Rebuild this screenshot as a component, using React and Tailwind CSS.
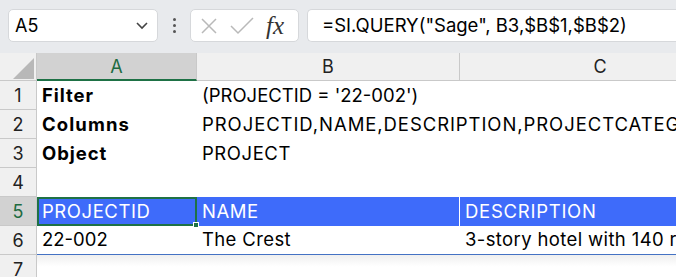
import React from "react";

const font = { fontFamily: "Inter, 'Noto Sans', sans-serif" };

const RowHead = ({ n, active }) => (
  <div
    className={`flex items-center justify-center border-b border-r border-[#c9c9c9] text-[18px] ${
      active ? "bg-[#d2d2d2] text-[#1e6b41]" : "bg-[#f0f0f0] text-[#222]"
    }`}
  >
    {n}
  </div>
);

const Cell = ({ children, className = "" }) => (
  <div className={`flex items-center whitespace-nowrap pl-[5px] text-[18.5px] text-black ${className}`}>
    {children}
  </div>
);

const App = () => {
  return (
    <div className="w-[676px] h-[277px] overflow-hidden bg-white" style={font}>
      {/* toolbar */}
      <div className="flex h-[53px] items-start bg-[#e8eaed] pt-[9px] pl-[8px]">
        <div className="flex h-[33px] w-[150px] items-center justify-between rounded-[5px] border border-[#d6d8db] bg-white pl-[6px] pr-[8px] text-[18px] text-black">
          <span>A5</span>
          <svg width="14" height="10" viewBox="0 0 14 10">
            <path d="M2 2 L7 7 L12 2" fill="none" stroke="#444" strokeWidth="1.6" />
          </svg>
        </div>
        <div className="flex h-[33px] w-[32px] flex-col items-center justify-center gap-[3px]">
          <span className="h-[3px] w-[3px] rounded-full bg-[#555]" />
          <span className="h-[3px] w-[3px] rounded-full bg-[#555]" />
          <span className="h-[3px] w-[3px] rounded-full bg-[#555]" />
        </div>
        <div className="flex h-[33px] w-[109px] items-center rounded-[5px] border border-[#d6d8db] bg-white">
          <svg width="20" height="20" viewBox="0 0 20 20" className="ml-[8px]">
            <path d="M3 3 L17 17 M17 3 L3 17" stroke="#b9b9b9" strokeWidth="1.5" />
          </svg>
          <svg width="26" height="20" viewBox="0 0 26 20" className="ml-[10px]">
            <path d="M2 10 L9 17 L24 2" fill="none" stroke="#b9b9b9" strokeWidth="1.5" />
          </svg>
          <span
            className="ml-[11px] text-[25px] italic leading-none text-[#333]"
            style={{ fontFamily: "'Liberation Serif', 'DejaVu Serif', serif" }}
          >
            fx
          </span>
        </div>
        <div className="ml-[8px] flex h-[33px] flex-1 items-center rounded-l-[5px] border border-r-0 border-[#d6d8db] bg-white pl-[14px] text-[18.5px] text-black whitespace-nowrap">
          =SI.QUERY("Sage", B3,$B$1,$B$2)
        </div>
      </div>

      {/* sheet */}
      <div className="grid grid-cols-[37px_160px_263px_280px] grid-rows-[28px_29px_29px_29px_29px_29px_29px_29px]">
        {/* header row */}
        <div className="relative border-b border-r border-[#c9c9c9] bg-[#f0f0f0]">
          <svg width="22" height="21" viewBox="0 0 22 21" className="absolute left-[13px] top-[5px]">
            <path d="M21 0 L21 21 L0 21 Z" fill="#b8b8b8" />
          </svg>
        </div>
        <div className="flex items-center justify-center border-b-2 border-r border-b-[#1e7145] border-r-[#c9c9c9] bg-[#d2d2d2] text-[18px] text-[#1e6b41]">
          A
        </div>
        <div className="flex items-center justify-center border-b border-r border-[#c9c9c9] bg-[#f0f0f0] text-[18px] text-[#222]">
          B
        </div>
        <div className="flex items-center justify-center border-b border-[#c9c9c9] bg-[#f0f0f0] text-[18px] text-[#222]">
          C
        </div>

        {/* row 1 */}
        <RowHead n="1" />
        <Cell className="font-bold tracking-[0.05em]">Filter</Cell>
        <Cell>(PROJECTID = '22-002')</Cell>
        <Cell />

        {/* row 2 */}
        <RowHead n="2" />
        <Cell className="font-bold tracking-[0.06em]">Columns</Cell>
        <Cell className="tracking-[0.05em]">PROJECTID,NAME,DESCRIPTION,PROJECTCATEGORY</Cell>
        <Cell />

        {/* row 3 */}
        <RowHead n="3" />
        <Cell className="font-bold tracking-[0.05em]">Object</Cell>
        <Cell className="tracking-[0.03em]">PROJECT</Cell>
        <Cell />

        {/* row 4 */}
        <RowHead n="4" />
        <Cell />
        <Cell />
        <Cell />

        {/* row 5 */}
        <RowHead n="5" active />
        <div className="relative flex items-center bg-[#3e6bfa] pl-[5px] text-[18.5px] tracking-[0.03em] text-white">
          <div className="absolute inset-0 border-2 border-[#1e7145]" />
          <div className="absolute -bottom-[2px] -right-[2px] h-[6px] w-[6px] border border-white bg-[#1e7145]" />
          PROJECTID
        </div>
        <div className="flex items-center border-r border-white bg-[#3e6bfa] pl-[5px] text-[18.5px] tracking-[0.03em] text-white">
          NAME
        </div>
        <div className="flex items-center bg-[#3e6bfa] pl-[5px] text-[18.5px] tracking-[0.04em] text-white whitespace-nowrap">
          DESCRIPTION
        </div>

        {/* row 6 */}
        <RowHead n="6" />
        <Cell className="border-b border-[#4472c4]">22-002</Cell>
        <Cell className="border-b border-[#4472c4] tracking-[0.02em]">The Crest</Cell>
        <Cell className="border-b border-[#4472c4] tracking-[0.02em]">3-story hotel with 140 rooms</Cell>

        {/* row 7 */}
        <RowHead n="7" />
        <Cell className="bg-gradient-to-b from-[#efefef] to-white to-40%" />
        <Cell className="bg-gradient-to-b from-[#efefef] to-white to-40%" />
        <Cell className="bg-gradient-to-b from-[#efefef] to-white to-40%" />
      </div>
    </div>
  );
};

export default App;
